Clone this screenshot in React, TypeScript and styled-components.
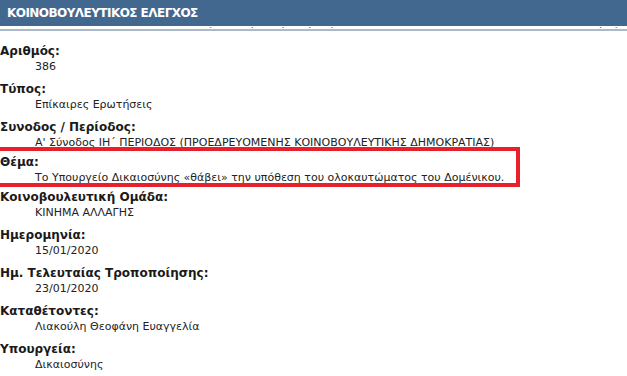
import styled, { createGlobalStyle } from 'styled-components';

const fields = [
  { label: 'Αριθμός:', value: '386' },
  { label: 'Τύπος:', value: 'Επίκαιρες Ερωτήσεις' },
  {
    label: 'Συνοδος / Περίοδος:',
    value: 'Α\' Σύνοδος ΙΗ΄ ΠΕΡΙΟΔΟΣ (ΠΡΟΕΔΡΕΥΟΜΕΝΗΣ ΚΟΙΝΟΒΟΥΛΕΥΤΙΚΗΣ ΔΗΜΟΚΡΑΤΙΑΣ)',
  },
  {
    label: 'Θέμα:',
    value: 'Το Υπουργείο Δικαιοσύνης «θάβει» την υπόθεση του ολοκαυτώματος του Δομένικου.',
    highlighted: true,
  },
  { label: 'Κοινοβουλευτική Ομάδα:', value: 'ΚΙΝΗΜΑ ΑΛΛΑΓΗΣ' },
  { label: 'Ημερομηνία:', value: '15/01/2020' },
  { label: 'Ημ. Τελευταίας Τροποποίησης:', value: '23/01/2020' },
  { label: 'Καταθέτοντες:', value: 'Λιακούλη Θεοφάνη Ευαγγελία' },
  { label: 'Υπουργεία:', value: 'Δικαιοσύνης' },
];

const GlobalStyle = createGlobalStyle`
  body {
    margin: 0;
    background: #ffffff;
    font-family: "DejaVu Sans", Verdana, sans-serif;
    color: #222222;
  }
`;

const App = () => {
  return (
    <Page>
      <GlobalStyle />
      <Header>
        <Title>ΚΟΙΝΟΒΟΥΛΕΥΤΙΚΟΣ ΕΛΕΓΧΟΣ</Title>
      </Header>
      <ScrolledStrip>
        <StripText $offset={150}>Α΄ Σύνοδος Επίκαιρου Ερωτήσεις</StripText>
        <StripText $offset={230}>Επίκαιρες Ερωτήσεις</StripText>
      </ScrolledStrip>
      <StripRule />
      <FieldList>
        {fields.map((item) => (
          <Field key={item.label} $highlighted={!!item.highlighted}>
            <Label>{item.label}</Label>
            <Value>{item.value}</Value>
          </Field>
        ))}
      </FieldList>
    </Page>
  );
};

export default App;

const Page = styled.div`
  width: 627px;
  height: 376px;
  overflow: hidden;
`;

const Header = styled.div`
  height: 26px;
  background-color: #436890;
  display: flex;
  align-items: center;
  padding-left: 7px;
  border-bottom: 1px solid #ffffff;
`;

const Title = styled.h1`
  margin: 0;
  color: #ffffff;
  font-size: 12px;
  font-weight: 700;
  letter-spacing: -0.55px;
`;

const ScrolledStrip = styled.div`
  height: 2px;
  overflow: hidden;
  display: flex;
`;

const StripText = styled.span<{ $offset: number }>`
  margin-left: ${(props) => props.$offset}px;
  margin-top: -10px;
  font-size: 11px;
  line-height: 12px;
  white-space: nowrap;
  color: #5a4f7a;
`;

const StripRule = styled.div`
  height: 2px;
  background-color: #a9b9ca;
`;

const FieldList = styled.dl`
  margin: 13px 0 0;
  display: flex;
  flex-direction: column;
  gap: 8px;
`;

const Field = styled.div<{ $highlighted: boolean }>`
  position: relative;

  ${(props) =>
    props.$highlighted &&
    `
    margin: -3px 0;

    &::after {
      content: '';
      position: absolute;
      left: -10px;
      top: -8px;
      width: 522px;
      height: 32px;
      border: 4px solid #e8202b;
      pointer-events: none;
    }
  `}
`;

const Label = styled.dt`
  font-size: 12px;
  font-weight: 700;
  line-height: 15px;
  color: #1a1a1a;
`;

const Value = styled.dd`
  margin: 0 0 0 35px;
  font-size: 11px;
  line-height: 15px;
  color: #222222;
  white-space: nowrap;
`;
